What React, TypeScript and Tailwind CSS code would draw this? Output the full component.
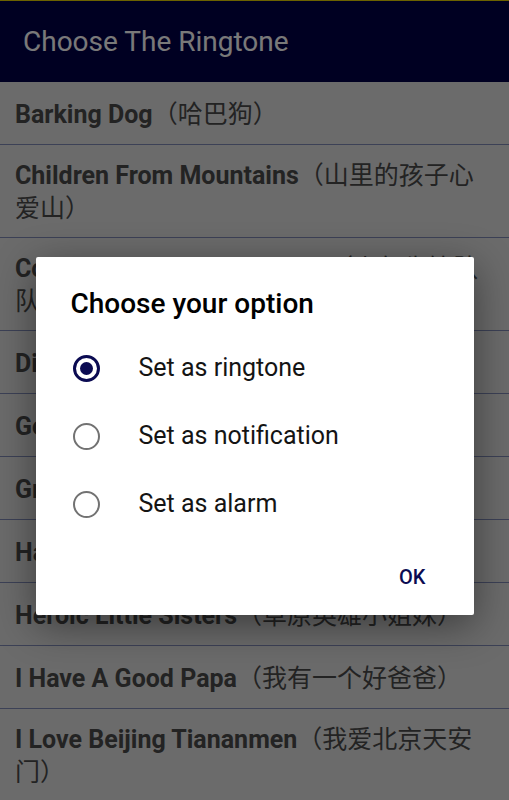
const songs = [
  { en: "Barking Dog", cn: "（哈巴狗）", tall: false },
  { en: "Children From Mountains", cn: "（山里的孩子心爱山）", tall: true },
  { en: "Communist Young Pioneers", cn: "（少年先锋队", cn2: "队歌）", tall: true },
  { en: "Ding Dong Ding Dong", cn: "（叮当叮当）", tall: false },
  { en: "Good Friends", cn: "（好朋友）", tall: false },
  { en: "Greeting Song", cn: "（问候歌）", tall: false },
  { en: "Happy New Year", cn: "（新年好）", tall: false },
  { en: "Heroic Little Sisters", cn: "（草原英雄小姐妹）", tall: false },
  { en: "I Have A Good Papa", cn: "（我有一个好爸爸）", tall: false },
  { en: "I Love Beijing Tiananmen", cn: "（我爱北京天安门）", tall: true },
]

const options = ["Set as ringtone", "Set as notification", "Set as alarm"]

const Radio = ({ checked }: { checked: boolean }) => (
  <div
    className={`w-[27px] h-[27px] rounded-full flex items-center justify-center ${
      checked ? "border-[3px] border-[#0b0b52]" : "border-[2.5px] border-[#727272]"
    }`}
  >
    {checked && <div className="w-[13px] h-[13px] rounded-full bg-[#0b0b52]" />}
  </div>
)

export default function App() {
  return (
    <div
      className="relative w-[509px] h-[800px] overflow-hidden bg-[#d6d6d6]"
      style={{ fontFamily: 'Roboto, "Noto Sans CJK SC", sans-serif' }}
    >
      <div className="h-[1px] bg-[#d8c400]" />
      <div className="h-[81px] bg-[#000044] flex items-center px-[23px]">
        <h1 className="text-[28px] text-[#f3f3f3]">Choose The Ringtone</h1>
      </div>

      <ul className="flex flex-col">
        {songs.map((s) => (
          <li
            key={s.en}
            className={`flex items-center px-[15px] border-b border-[#7983ad] ${
              s.tall ? "h-[93px]" : "h-[63px]"
            }`}
          >
            <p className="text-[25px] leading-[31px] text-[#474747]">
              <span className="font-bold">{s.en}</span>
              <span style={{ fontFamily: '"Noto Sans CJK SC", sans-serif' }}>
                {s.cn}
                {s.cn2 && (
                  <>
                    <br />
                    {s.cn2}
                  </>
                )}
              </span>
            </p>
          </li>
        ))}
      </ul>

      {/* dim overlay + dialog */}
      <div className="absolute inset-0 bg-black/50 flex items-start justify-center pt-[257px]">
        <div className="w-[438px] h-[358px] bg-white rounded-[2px] shadow-[0_10px_40px_rgba(0,0,0,0.45)] flex flex-col">
          <h2 className="pl-[35px] pt-[31px] text-[28px] font-medium text-black leading-[32px]">
            Choose your option
          </h2>
          <div className="flex flex-col mt-[14px]">
            {options.map((o, i) => (
              <div key={o} className="flex items-center h-[68px] pl-[37px]">
                <Radio checked={i === 0} />
                <span className="ml-[39px] text-[25px] text-[#141414]">{o}</span>
              </div>
            ))}
          </div>
          <div className="flex justify-end mt-auto pb-[23px] pr-[48px]">
            <button className="text-[20px] font-medium text-[#0b0b52]">OK</button>
          </div>
        </div>
      </div>
    </div>
  )
}
